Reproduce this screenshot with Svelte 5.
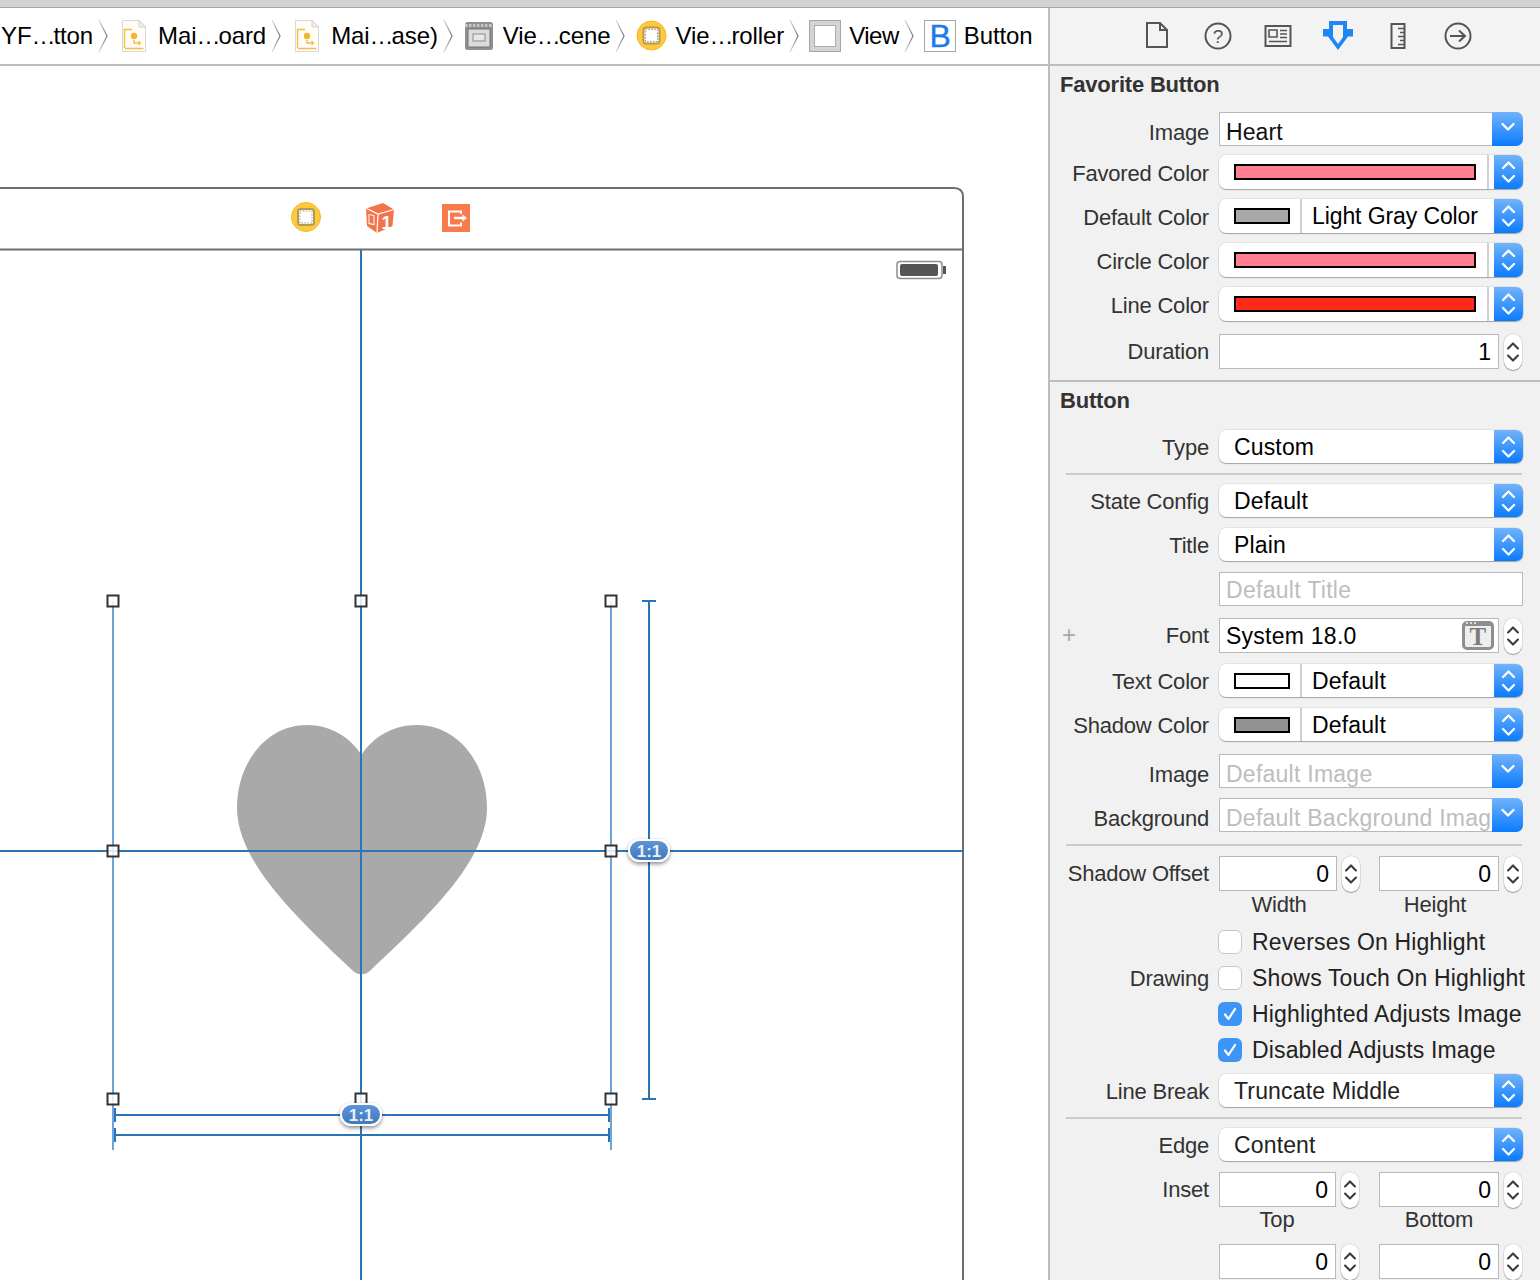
<script>
  // Xcode storyboard editor + attributes inspector.
  const crumbs = [
    { icon: null, head: "YF", tail: "tton" },
    { icon: "story", head: "Mai", tail: "oard" },
    { icon: "story", head: "Mai", tail: "ase)" },
    { icon: "scene", head: "Vie", tail: "cene" },
    { icon: "vc", head: "Vie", tail: "roller" },
    { icon: "view", tail: "View", narrow: true },
    { icon: "button", tail: "Button", last: true }
  ];
  const handles = [
    [113, 601], [361, 601], [611, 601],
    [113, 851], [611, 851],
    [113, 1099], [361, 1099], [611, 1099]
  ];
</script>

{#snippet updown(stroke, w, h)}
  <svg class="chev" width={w} height={h} viewBox="0 0 20 34" fill="none" stroke={stroke} stroke-width="2.3" stroke-linecap="round" stroke-linejoin="round">
    <path d="M4.5 13 10 7.5 15.5 13" />
    <path d="M4.5 21 10 26.5 15.5 21" />
  </svg>
{/snippet}

{#snippet popup(text, cls = "")}
  <div class="popup {cls}">
    <span class="popup-text">{text}</span>
    <span class="arrow">{@render updown("#fff", 30, 34)}</span>
  </div>
{/snippet}

{#snippet combo(text, muted = false)}
  <div class="combo">
    <span class="combo-text" class:muted>{text}</span>
    <span class="arrow combo-arrow">
      <svg width="16" height="10" viewBox="0 0 16 10" fill="none" stroke="#fff" stroke-width="2.4" stroke-linecap="round" stroke-linejoin="round"><path d="M2.5 2 8 7.5 13.5 2" /></svg>
    </span>
  </div>
{/snippet}

{#snippet well(color)}
  <div class="popup well">
    <span class="swatch" style="background:{color}"></span>
    <span class="well-gap"></span>
    <span class="arrow">{@render updown("#fff", 30, 34)}</span>
  </div>
{/snippet}

{#snippet namedWell(color, text, cls = "")}
  <div class="popup well named {cls}">
    <span class="named-cell"><span class="swatch" style="background:{color}"></span></span>
    <span class="popup-text">{text}</span>
    <span class="arrow">{@render updown("#fff", 30, 34)}</span>
  </div>
{/snippet}

{#snippet stepper()}
  <span class="stepper">{@render updown("#3a3a3a", 18, 32)}</span>
{/snippet}

{#snippet num(value)}
  <div class="pair-cell">
    <div class="field num">{value}</div>
    {@render stepper()}
  </div>
{/snippet}

{#snippet check(text, on = false)}
  <div class="check-line">
    <span class="box" class:on>
      {#if on}
        <svg width="24" height="24" viewBox="0 0 24 24" fill="none" stroke="#fff" stroke-width="2.2" stroke-linecap="round" stroke-linejoin="round"><path d="M7 12.5 10.5 17 17 7" /></svg>
      {/if}
    </span>
    <span class="check-text">{text}</span>
  </div>
{/snippet}

{#snippet vcIcon()}
  <circle cx="16.500" cy="15.500" r="14.500" fill="#ffc93c" stroke="#f3b82c" />
  <rect x="8.500" y="7.500" width="16" height="16" rx="2.500" fill="#fff" stroke="#b59a55" stroke-width="2" />
  <rect x="10.500" y="9.500" width="12" height="12" fill="none" stroke="#9a9a80" stroke-width="1" stroke-dasharray="1.500 1.500" />
{/snippet}

{#snippet crumbIcon(kind)}
  <svg class="crumb-icon" width="32" height="32" viewBox="0 0 32 32">
    {#if kind === "story"}
      <path d="M4.500 .5H21L27.500 7V31.500H4.500Z" fill="#fffdf6" stroke="#d8d8d8" />
      <path d="M21 .5V7H27.500Z" fill="#f0f0f0" stroke="#d0d0d0" />
      <path d="M6.500 28V9.500H14M7 28.500H25.500M16 20V23H22" fill="none" stroke="#f3bd48" stroke-width="1.400" />
      <path d="M20.500 21 22.500 23 20.500 25" fill="none" stroke="#f3bd48" stroke-width="1.200" />
      <circle cx="16" cy="16" r="3.200" fill="#f5b52f" />
    {:else if kind === "scene"}
      <rect x="2" y="2" width="28" height="28" rx="2.500" fill="#8f8f8f" />
      <path d="M2 5.500H30" stroke="#c8c8c8" stroke-width="3" stroke-dasharray="2.500 1.500" />
      <rect x="5" y="9" width="22" height="18" fill="#dcdcdc" stroke="#777" />
      <rect x="10" y="14" width="12" height="7" fill="#e8e8e8" stroke="#8a8a8a" />
    {:else if kind === "vc"}
      {@render vcIcon()}
    {:else if kind === "view"}
      <rect x=".5" y=".5" width="31" height="31" fill="#d4d4d4" stroke="#a6a6a6" />
      <rect x="5.500" y="5.500" width="21" height="21" fill="#fff" stroke="#aeaeae" />
    {:else}
      <rect x=".5" y=".5" width="31" height="31" fill="#fff" stroke="#a6a6a6" />
      <text x="16" y="27" text-anchor="middle" class="b-glyph">B</text>
    {/if}
  </svg>
{/snippet}

<div class="app">
  <div class="window-top"></div>
  <div class="main">
    <section class="editor">
      <nav class="crumbs">
        {#each crumbs as c}
          {#if c.icon}{@render crumbIcon(c.icon)}{/if}
          <span class="crumb-text" class:first={!c.icon} class:narrow={c.narrow}>{#if c.head}{c.head}<span class="ell">…</span>{/if}{c.tail}</span>
          {#if !c.last}
            <svg class="crumb-sep" width="10" height="34" viewBox="0 0 10 34" fill="none">
              <defs>
                <linearGradient id="sep" x1="0" y1="0" x2="0" y2="1">
                  <stop offset="0" stop-color="#ddd" />
                  <stop offset=".5" stop-color="#777" />
                  <stop offset="1" stop-color="#ddd" />
                </linearGradient>
              </defs>
              <path d="M1 1 9 17 1 33" stroke="url(#sep)" stroke-width="1.200" />
            </svg>
          {/if}
        {/each}
      </nav>

      <div class="canvas">
        <svg class="scene" width="1048" height="1214" viewBox="0 66 1048 1214">
          <defs>
            <linearGradient id="pill" x1="0" y1="0" x2="0" y2="1">
              <stop offset="0" stop-color="#5d96d8" />
              <stop offset="1" stop-color="#3f78bb" />
            </linearGradient>
            <filter id="pillShadow" x="-30%" y="-50%" width="160%" height="220%">
              <feDropShadow dx="0" dy="2" stdDeviation="2" flood-color="#000" flood-opacity=".45" />
            </filter>
          </defs>

          <path d="M-4 188H954Q963 188 963 197V1284" fill="none" stroke="#6e6e6e" stroke-width="2" />
          <path d="M-4 249.500H963" stroke="#6e6e6e" stroke-width="2" />

          <!-- scene dock -->
          <g transform="translate(289.500 201.500)">{@render vcIcon()}</g>
          <g>
            <path d="M383 203 394 209.500 392.500 226 377 233 367 226 366 208.500Z" fill="#f4744a" />
            <path d="M366.500 208.500 378 214 394 209.500M378 214 377 233" fill="none" stroke="#fff" stroke-width="1.200" />
            <rect x="369" y="214.500" width="5" height="9" fill="none" stroke="#fff" stroke-width="1" transform="skewY(12)" transform-origin="369 214" />
            <text x="386.500" y="228.500" text-anchor="middle" class="cube-num">1</text>
          </g>
          <rect x="442" y="204" width="28" height="28" fill="#f97a4a" />
          <path d="M461 214V211.500H449V225.500H461V222.500" fill="none" stroke="#fff" stroke-width="2" />
          <path d="M454 218H463" stroke="#fff" stroke-width="2.500" />
          <path d="M462.500 214.500 467 218 462.500 221.500Z" fill="#fff" />

          <!-- battery -->
          <rect x="897" y="261.500" width="45" height="17" rx="3" fill="#fff" stroke="#8d8d8d" stroke-width="1.500" />
          <rect x="900" y="264" width="38" height="12" rx="2" fill="#555" />
          <rect x="943" y="266" width="3" height="8" fill="#555" />

          <!-- favourite button -->
          <path d="M361.500 755C351 738 331 725 307 725C267 725 237 762 237 808C237 862 298 919 351 969C357 976 366 976 372 969C425 919 487 862 487 808C487 762 457 725 417 725C392 725 372 738 361.500 755Z" fill="#a9a9a9" />

          <!-- selection edges and constraints -->
          <path d="M113 601V1150M611 601V1150" stroke="#6ea3dc" stroke-width="2" />
          <path d="M361 250V1280M0 851H963" stroke="#2c75b4" stroke-width="2" />
          <path d="M649 601V1099M642 601H656M642 1099H656" stroke="#2c75b4" stroke-width="2" />
          <path d="M115 1115H609M115 1135H609M115 1108V1122M115 1128V1142M609 1108V1122M609 1128V1142" stroke="#2c75b4" stroke-width="2" />

          {#each handles as [x, y]}
            <rect x={x - 5.5} y={y - 5.5} width="11" height="11" fill="#fff" fill-opacity=".85" stroke="#333" stroke-width="2" />
          {/each}

          {#each [[649, 851], [361, 1115]] as [x, y]}
            <rect x={x - 20} y={y - 11} width="40" height="21" rx="10.500" fill="url(#pill)" stroke="#fff" stroke-width="2" filter="url(#pillShadow)" />
            <text x={x} y={y + 6} text-anchor="middle" class="pill-text">1:1</text>
          {/each}
        </svg>
      </div>
    </section>

    <aside class="inspector">
      <div class="tabs">
        <svg width="340" height="32" viewBox="0 0 340 32" fill="none" stroke="#555" stroke-width="2">
          <path d="M2 3H15L22 10V27H2ZM15 3V10H22" />
          <circle cx="73" cy="16" r="12.500" />
          <text x="73" y="23" text-anchor="middle" class="tab-q">?</text>
          <path d="M120.500 6H145.500V26H120.500Z" />
          <path d="M124 10H132V17H124Z" stroke-width="1.600" />
          <path d="M135 10.500H142M135 14H142M135 17.500H142M124 21.500H142" stroke-width="1.600" />
          <path d="M184 1H202V9H208V16.500H203L193 30L183 16.500H178V9H184Z" fill="#1f87f5" stroke="none" />
          <path d="M188 5H198V17L193 24L188 17Z" fill="#f3f3f3" stroke="none" />
          <path d="M246.500 4H259.500V28H246.500Z" />
          <path d="M253 8.500H259M255 12.500H259M253 16.500H259M255 20.500H259M253 24.500H259" stroke-width="1.500" />
          <circle cx="313" cy="16" r="12.500" />
          <path d="M305 16H320M314 10.500 320 16 314 21.500" />
        </svg>
      </div>

      <h3 class="head">Favorite Button</h3>
      <div class="stack first">
        <div class="row combo-row"><span class="label">Image</span>{@render combo("Heart")}</div>
        <div class="row tight low"><span class="label">Favored Color</span>{@render well("#ff7f90")}</div>
        <div class="row low"><span class="label">Default Color</span>{@render namedWell("#a9a9a9", "Light Gray Color", "squeeze")}</div>
        <div class="row low"><span class="label">Circle Color</span>{@render well("#ff7f90")}</div>
        <div class="row low"><span class="label">Line Color</span>{@render well("#ff2a1a")}</div>
        <div class="row tall duration">
          <span class="label">Duration</span>
          <div class="pair-cell wide"><div class="field num">1</div>{@render stepper()}</div>
        </div>
      </div>

      <hr class="rule" />

      <h3 class="head">Button</h3>
      <div class="stack">
        <div class="row"><span class="label">Type</span>{@render popup("Custom")}</div>
        <hr class="sub" />
        <div class="row"><span class="label">State Config</span>{@render popup("Default")}</div>
        <div class="row"><span class="label">Title</span>{@render popup("Plain")}</div>
        <div class="row"><span class="label"></span><div class="field placeholder">Default Title</div></div>
        <div class="row tall far">
          <span class="label has-plus"><span class="plus">+</span>Font</span>
          <div class="pair-cell wide">
            <div class="field font">
              System 18.0
              <span class="t-icon"><span class="t-dots"></span>T</span>
            </div>
            {@render stepper()}
          </div>
        </div>
        <div class="row near"><span class="label">Text Color</span>{@render namedWell("#fff", "Default")}</div>
        <div class="row"><span class="label">Shadow Color</span>{@render namedWell("#929292", "Default")}</div>
        <div class="row far combo-row"><span class="label">Image</span>{@render combo("Default Image", true)}</div>
        <div class="row combo-row"><span class="label">Background</span>{@render combo("Default Background Image", true)}</div>
        <hr class="sub far" />
        <div class="row tall">
          <span class="label">Shadow Offset</span>
          <div class="pair">{@render num("0")}{@render num("0")}</div>
        </div>
      </div>
      <div class="captions"><span>Width</span><span>Height</span></div>

      <div class="checks">
        <div class="row check-row"><span class="label"></span>{@render check("Reverses On Highlight")}</div>
        <div class="row check-row"><span class="label">Drawing</span>{@render check("Shows Touch On Highlight")}</div>
        <div class="row check-row"><span class="label"></span>{@render check("Highlighted Adjusts Image", true)}</div>
        <div class="row check-row"><span class="label"></span>{@render check("Disabled Adjusts Image", true)}</div>
      </div>

      <div class="stack after-checks">
        <div class="row"><span class="label">Line Break</span>{@render popup("Truncate Middle", "soft")}</div>
        <hr class="sub" />
        <div class="row"><span class="label">Edge</span>{@render popup("Content", "soft")}</div>
        <div class="row tall">
          <span class="label">Inset</span>
          <div class="pair inset">{@render num("0")}{@render num("0")}</div>
        </div>
      </div>
      <div class="captions inset-caps"><span>Top</span><span>Bottom</span></div>
      <div class="row tall">
        <span class="label"></span>
        <div class="pair inset">{@render num("0")}{@render num("0")}</div>
      </div>
    </aside>
  </div>
</div>

<style>
  :global(body) {
    margin: 0;
    overflow: hidden;
    background: #fff;
  }
  .app {
    width: 1540px;
    height: 1280px;
    display: flex;
    flex-direction: column;
    overflow: hidden;
    font-family: "Liberation Sans", Arial, sans-serif;
  }
  .window-top {
    height: 7px;
    flex: none;
    background: #d3d3d3;
    border-bottom: 1px solid #a8a8a8;
  }
  .main {
    flex: 1;
    display: flex;
    min-height: 0;
  }

  /* editor side */
  .editor {
    width: 1048px;
    flex: none;
    display: flex;
    flex-direction: column;
    background: #fff;
  }
  .crumbs {
    height: 58px;
    flex: none;
    box-sizing: border-box;
    border-bottom: 2px solid #bdbdbd;
    display: flex;
    align-items: center;
    font-size: 24px;
    letter-spacing: -0.1px;
    color: #000;
    white-space: nowrap;
    overflow: hidden;
  }
  .crumb-text {
    margin-left: 8px;
  }
  .crumb-text.first {
    margin-left: 1px;
  }
  .crumb-text.narrow {
    letter-spacing: -0.5px;
  }
  .ell {
    letter-spacing: -3px;
    margin-right: 1px;
  }
  .crumb-sep {
    margin-left: 5px;
    flex: none;
  }
  .crumb-icon {
    margin-left: 10px;
    flex: none;
  }
  .b-glyph {
    font-size: 32px;
    fill: #1b7be8;
    stroke: #1b7be8;
    stroke-width: 0.4;
    font-family: "Liberation Sans", sans-serif;
  }
  .canvas {
    flex: 1;
    min-height: 0;
    position: relative;
  }
  .scene {
    position: absolute;
    left: 0;
    top: 0;
    display: block;
  }
  .cube-num {
    font-size: 18px;
    font-weight: 700;
    fill: #fff;
    font-family: "Liberation Sans", sans-serif;
  }
  .pill-text {
    font-size: 17px;
    font-weight: 700;
    fill: #fff;
    fill-opacity: 0.9;
    font-family: "Liberation Sans", sans-serif;
  }

  /* inspector */
  .inspector {
    flex: 1;
    box-sizing: border-box;
    border-left: 2px solid #bdbdbd;
    background: #f1f1f1;
    color: #333;
    font-size: 22px;
    overflow: hidden;
  }
  .tabs {
    height: 58px;
    box-sizing: border-box;
    border-bottom: 2px solid #bdbdbd;
    background: #f3f3f3;
    padding: 12px 0 0 95px;
  }
  .tabs svg {
    display: block;
    overflow: visible;
  }
  .tab-q {
    font-size: 19px;
    font-weight: 400;
    fill: #555;
    stroke: none;
    font-family: "Liberation Sans", sans-serif;
  }
  .head {
    margin: 0;
    height: 38px;
    line-height: 38px;
    padding-left: 10px;
    font-size: 22px;
    font-weight: 700;
    letter-spacing: -0.2px;
    color: #333;
  }
  .stack {
    display: flex;
    flex-direction: column;
    gap: 10px;
    padding-top: 10px;
  }
  .stack.first {
    padding-top: 8px;
  }
  .row {
    display: flex;
    align-items: center;
    height: 34px;
    flex: none;
  }
  .row.tall {
    height: 35px;
  }
  .row.tight {
    margin-top: -1px;
  }
  .row.far {
    margin-top: 2px;
  }
  .row.near {
    margin-top: 1px;
  }
  .row.duration {
    margin-top: 3px;
  }
  .label {
    box-sizing: border-box;
    width: 159px;
    margin-right: 10px;
    flex: none;
    text-align: right;
    letter-spacing: -0.2px;
    line-height: 34px;
    padding-top: 1px;
  }
  .row.low .label {
    padding-top: 3px;
  }
  .row.combo-row .label {
    padding-top: 7px;
  }
  .has-plus {
    display: flex;
    justify-content: space-between;
    padding-left: 12px;
  }
  .plus {
    color: #a8a8a8;
    font-size: 24px;
    line-height: 32px;
  }
  .rule {
    margin: 11px 0 0;
    height: 2px;
    border: 0;
    background: #bdbdbd;
  }
  .sub {
    width: 456px;
    height: 2px;
    margin: -1px 0 -1px 16px;
    border: 0;
    flex: none;
    background: #cbcbcb;
  }
  .sub.far {
    margin: 2px 0 0 16px;
  }

  /* controls */
  .popup {
    box-sizing: border-box;
    width: 304px;
    height: 33px;
    align-self: flex-start;
    display: flex;
    align-items: center;
    background: #fff;
    border-radius: 7px;
    box-shadow: 0 1px 1px rgba(0, 0, 0, 0.28), 0 0 0 0.5px rgba(0, 0, 0, 0.12);
    overflow: hidden;
    position: relative;
    color: #000;
  }
  .row.low .popup {
    height: 34px;
  }
  .popup-text {
    flex: 1;
    padding-left: 15px;
    font-size: 23px;
    letter-spacing: 0.15px;
    white-space: nowrap;
    line-height: 34px;
  }
  .popup.soft .popup-text {
    color: #222;
  }
  .popup.squeeze .popup-text {
    letter-spacing: -0.1px;
  }
  .arrow {
    width: 29px;
    height: 100%;
    flex: none;
    display: flex;
    align-items: center;
    justify-content: center;
    background: linear-gradient(#72b3fb, #0a7bff);
  }
  .chev {
    display: block;
  }
  .well .swatch {
    display: block;
    box-sizing: border-box;
    width: 242px;
    height: 16px;
    margin-left: 15px;
    border: 2px solid #000;
    flex: none;
  }
  .well-gap {
    flex: 1;
    align-self: stretch;
    margin-left: 11px;
    border-left: 2px solid #cfcfcf;
  }
  .named-cell {
    width: 81px;
    height: 100%;
    box-sizing: content-box;
    border-right: 2px solid #cfcfcf;
    display: flex;
    align-items: center;
    flex: none;
  }
  .well .named-cell .swatch {
    width: 56px;
  }
  .well.named .popup-text {
    padding-left: 10px;
  }
  .combo {
    box-sizing: border-box;
    width: 304px;
    height: 34px;
    display: flex;
    position: relative;
    background: #fff;
    border: 1px solid #b9b9b9;
    border-right: 0;
    border-radius: 0 7px 7px 0;
    color: #111;
  }
  .combo-text {
    flex: 1;
    min-width: 0;
    overflow: hidden;
    white-space: nowrap;
    padding-left: 6px;
    font-size: 23px;
    line-height: 39px;
    letter-spacing: 0.1px;
  }
  .muted {
    color: #bdbdbd;
    letter-spacing: 0.25px;
  }
  .combo-arrow {
    width: 31px;
    margin: -1px 0;
    height: 34px;
    border-radius: 0 7px 7px 0;
    padding-bottom: 4px;
    box-sizing: border-box;
  }
  .field {
    box-sizing: border-box;
    width: 304px;
    height: 34px;
    flex: none;
    background: #fff;
    border: 1px solid #b9b9b9;
    color: #000;
    font-size: 23px;
    line-height: 35px;
    white-space: nowrap;
  }
  .placeholder {
    padding-left: 6px;
    color: #bdbdbd;
    letter-spacing: 0.3px;
  }
  .font {
    flex: 1;
    width: auto;
    height: 35px;
    padding-left: 6px;
    position: relative;
    letter-spacing: 0.25px;
  }
  .t-icon {
    position: absolute;
    right: 4px;
    top: 2px;
    width: 32px;
    height: 29px;
    box-sizing: border-box;
    border: 3px solid #8e8e8e;
    border-top-width: 5px;
    border-radius: 5px;
    background: #eee;
    color: #7b7b7b;
    font: 700 25px/22px "Liberation Serif", serif;
    text-align: center;
  }
  .t-dots {
    position: absolute;
    left: 1px;
    top: -4px;
    width: 10px;
    height: 2px;
    background: repeating-linear-gradient(90deg, #ddd 0 2px, transparent 2px 4px);
  }
  .pair {
    width: 304px;
    display: grid;
    grid-template-columns: 142px 144px;
    column-gap: 18px;
  }
  .pair-cell {
    display: flex;
    align-items: center;
    gap: 5px;
    min-width: 0;
    padding-right: 1px;
  }
  .pair-cell.wide {
    box-sizing: border-box;
    width: 304px;
  }
  .num {
    flex: 1;
    width: auto;
    min-width: 0;
    height: 35px;
    padding-right: 7px;
    text-align: right;
  }
  .inset {
    grid-template-columns: 141px 144px;
    column-gap: 19px;
  }
  .stepper {
    width: 18px;
    height: 36px;
    flex: none;
    display: flex;
    align-items: center;
    justify-content: center;
    background: #fff;
    border-radius: 9px;
    box-shadow: 0 1px 1px rgba(0, 0, 0, 0.3), 0 0 0 0.5px rgba(0, 0, 0, 0.14);
  }
  .captions {
    display: grid;
    grid-template-columns: 120px 120px;
    column-gap: 36px;
    margin-left: 169px;
    height: 28px;
    line-height: 28px;
    text-align: center;
    letter-spacing: -0.2px;
  }
  .checks {
    margin-top: 5px;
  }
  .check-row {
    height: 36px;
  }
  .check-line {
    display: flex;
    align-items: center;
    margin-left: -1px;
  }
  .box {
    box-sizing: border-box;
    width: 24px;
    height: 24px;
    flex: none;
    border-radius: 6px;
    background: #fff;
    border: 1px solid #c6c6c6;
    display: block;
  }
  .box.on {
    background: #3d96f7;
    border: 0;
  }
  .box svg {
    display: block;
  }
  .check-text {
    margin-left: 10px;
    font-size: 23px;
    letter-spacing: 0.15px;
    color: #222;
    white-space: nowrap;
  }
  .after-checks {
    padding-top: 6px;
  }
  .inset-caps {
    grid-template-columns: 116px 120px;
    column-gap: 44px;
    margin-bottom: 11px;
    height: 26px;
    line-height: 26px;
  }
</style>
